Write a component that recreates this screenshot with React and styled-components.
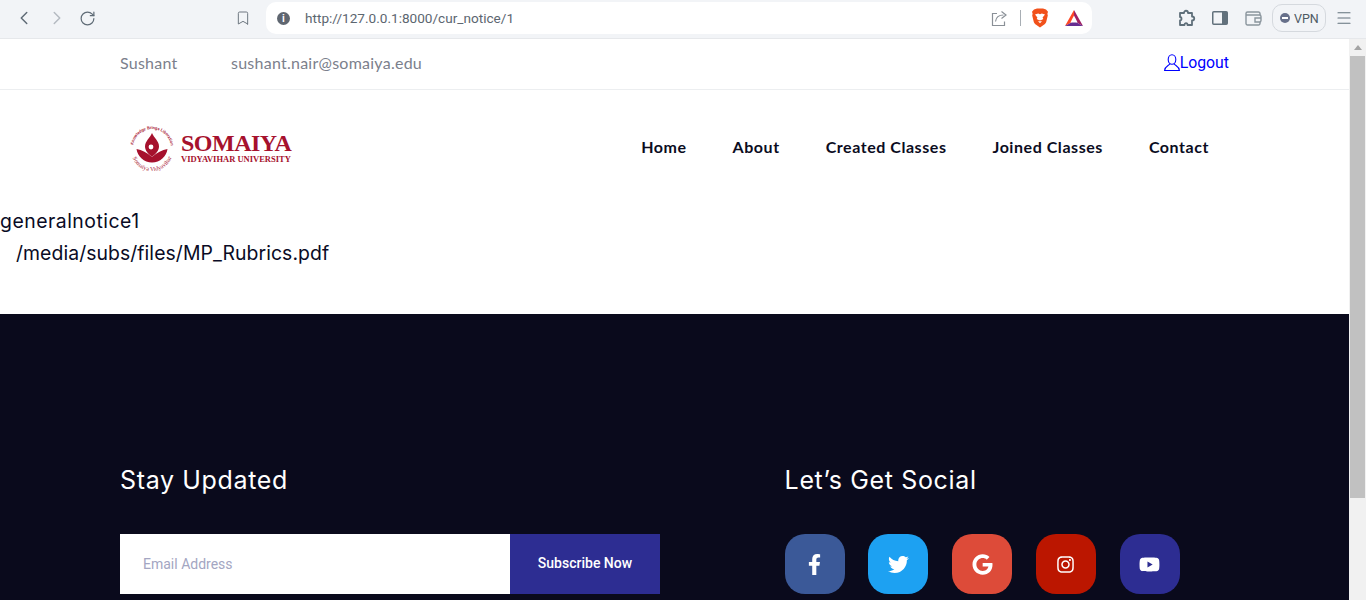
import React from "react";
import styled, { createGlobalStyle } from "styled-components";
import { FaFacebookF, FaTwitter, FaGoogle, FaInstagram, FaYoutube } from "react-icons/fa";
import { ChevronLeft, ChevronRight, RotateCw, Bookmark, Menu } from "lucide-react";

const Global = createGlobalStyle`
  html, body { margin: 0; padding: 0; height: 600px; overflow: hidden; background: #fff; }
  * { box-sizing: border-box; }
`;

const Shell = styled.div`
  width: 1366px;
  height: 600px;
  display: flex;
  flex-direction: column;
  overflow: hidden;
  font-family: "Lato", sans-serif;
`;

const BrowserBar = styled.header`
  flex: 0 0 39px;
  display: flex;
  align-items: center;
  background: #f2f4f7;
  border-bottom: 1px solid #e6e8eb;
  padding: 0 12px 2px 13px;
  color: #5f6b76;
`;

const NavIcons = styled.div`
  display: flex;
  align-items: center;
  gap: 11px;
  width: 222px;
`;

const NavIcon = styled.span`
  display: flex;
  color: ${(p) => (p.$dim ? "#b4bac1" : "#5f6b76")};
`;

const BookmarkSlot = styled.span`
  display: flex;
  width: 31px;
  color: #6e7780;
`;

const UrlBar = styled.div`
  width: 826px;
  height: 32px;
  background: #fff;
  border-radius: 10px;
  display: flex;
  align-items: center;
  padding: 0 9px 0 11px;
  font: 13.6px "Roboto", sans-serif;
  color: #5c6670;
`;

const InfoDot = styled.span`
  width: 13px;
  height: 13px;
  border-radius: 50%;
  background: #5f6670;
  color: #fff;
  font: bold 10px/13px "Liberation Sans", sans-serif;
  text-align: center;
  margin-right: 15px;
`;

const UrlText = styled.span`
  flex: 1;
`;

const UrlActions = styled.div`
  display: flex;
  align-items: center;
  gap: 16px;
`;

const ShareGroup = styled.div`
  display: flex;
  align-items: center;
  margin-right: -6px;
`;

const Divider = styled.span`
  width: 1px;
  height: 16px;
  background: #a8aeb4;
  margin-left: 12px;
`;

const ToolIcons = styled.div`
  display: flex;
  align-items: center;
  margin-left: 86px;
  gap: 16px;
  color: #62717c;
`;

const WalletSlot = styled.span`
  display: flex;
  margin-left: 1px;
`;

const VpnChip = styled.div`
  display: flex;
  align-items: center;
  gap: 4px;
  height: 28px;
  width: 54px;
  margin-left: 10px;
  padding-left: 7px;
  border: 1px solid #d5d9de;
  border-radius: 10px;
  font: 12.5px "Roboto", sans-serif;
  color: #4e5a64;
`;

const VpnDot = styled.span`
  width: 10px;
  height: 10px;
  border-radius: 50%;
  background: #67708a;
  display: flex;
  align-items: center;
  justify-content: center;
  &::after {
    content: "";
    width: 6px;
    height: 2px;
    background: #fff;
  }
`;

const MenuSlot = styled.span`
  display: flex;
  margin-left: 9px;
  color: #62717c;
`;

const Viewport = styled.div`
  flex: 1;
  min-height: 0;
  display: flex;
`;

const Page = styled.main`
  flex: 1;
  min-width: 0;
  display: flex;
  flex-direction: column;
`;

const Scrollbar = styled.div`
  flex: 0 0 17px;
  background: #f1f1f1;
  display: flex;
  flex-direction: column;
  align-items: center;
  padding-top: 6px;
`;

const ScrollArrow = styled.span`
  width: 0;
  height: 0;
  border-left: 4px solid transparent;
  border-right: 4px solid transparent;
  border-bottom: 5px solid #a3a3a3;
`;

const ScrollThumb = styled.span`
  width: 15px;
  height: 442px;
  margin-top: 6px;
  background: #c1c1c1;
`;

const TopBar = styled.div`
  flex: 0 0 51px;
  display: flex;
  align-items: center;
  padding: 0 120px 3px;
  border-bottom: 1px solid #eceef0;
  font-size: 16px;
  color: #7b808c;
  letter-spacing: 0.25px;
`;

const TopName = styled.span`
  width: 111px;
`;

const TopMail = styled.span`
  flex: 1;
`;

const LogoutLink = styled.a`
  display: flex;
  align-items: center;
  color: #0000ff;
  font: 15.8px "Roboto", sans-serif;
  letter-spacing: 0;
`;

const NavRow = styled.nav`
  flex: 0 0 114px;
  display: flex;
  align-items: center;
  justify-content: space-between;
  padding: 0 140px 0 128px;
`;

const Logo = styled.div`
  display: flex;
  align-items: center;
  gap: 5px;
  margin-top: 1px;
`;

const LogoWords = styled.div`
  display: flex;
  flex-direction: column;
  color: #a6112d;
  font-family: "Liberation Serif", serif;
  font-weight: 700;
  white-space: nowrap;
`;

const LogoName = styled.span`
  font-size: 24px;
  line-height: 23px;
  letter-spacing: -0.5px;
`;

const LogoSub = styled.span`
  font-size: 8.5px;
  line-height: 9px;
`;

const NavLinks = styled.div`
  display: flex;
  gap: 46px;
  margin-bottom: 2px;
`;

const NavLink = styled.a`
  font-size: 16px;
  font-weight: 700;
  color: #0b0c1e;
  letter-spacing: 0.55px;
`;

const Notice = styled.section`
  flex: 0 0 110px;
  font-size: 19.4px;
  color: #0a0b25;
  font-family: "Inter", sans-serif;
`;

const NoticeTitle = styled.div`
  line-height: 32px;
  margin-top: 1px;
  letter-spacing: 0.5px;
`;

const NoticeFile = styled.div`
  line-height: 32px;
  padding-left: 16px;
  letter-spacing: 0.07px;
`;

const Footer = styled.footer`
  flex: 1;
  min-height: 0;
  background: #0a0a1c;
  padding: 148px 120px 0;
  display: flex;
  gap: 124.6px;
  color: #fff;
  font-family: "Inter", sans-serif;
`;

const FooterCol = styled.div`
  width: ${(p) => p.$w}px;
  flex: none;
`;

const FooterTitle = styled.h3`
  margin: 0 0 36px;
  font-size: 25px;
  font-weight: 400;
  line-height: 36px;
  letter-spacing: 0.65px;
`;

const SubscribeForm = styled.div`
  display: flex;
  height: 60px;
`;

const EmailField = styled.div`
  width: 390px;
  background: #fff;
  color: #a3a6c2;
  font: 14px/60px "Roboto", sans-serif;
  padding-left: 23px;
`;

const SubscribeButton = styled.div`
  width: 150px;
  background: #2d2d92;
  color: #fff;
  font: 500 14px/58px "Roboto", sans-serif;
  text-align: center;
`;

const SocialRow = styled.div`
  display: flex;
  gap: 23.75px;
`;

const SocialButton = styled.a`
  width: 60px;
  height: 60px;
  border-radius: 20px;
  background: ${(p) => p.$bg};
  color: #fff;
  display: flex;
  align-items: center;
  justify-content: center;
  font-size: ${(p) => p.$size || 21}px;
`;

const Brave = () => (
  <svg width="18" height="20" viewBox="0 0 18 20">
    <path d="M3 1.5 6 .5h6l3 1 2 2.3-.6 2 .4 1.600-1.600 6.600c-.4 1.200-1.200 2-2.300 2.700L9 19.500l-3.900-2.800c-1.100-.7-1.900-1.500-2.300-2.700L1.200 7.400l.4-1.600-.6-2z" fill="#f1511b" />
    <path d="M4 6.500 7.200 5.600 9 6.300l1.800-.7 3.200.9-2.400 3 .7 1.400-2.300 1.300H8l-2.300-1.300.7-1.400z" fill="#fff" />
    <path d="M7 13.200h4L9 15.200z" fill="#fff" />
  </svg>
);

const Bat = () => (
  <svg width="18" height="16" viewBox="0 0 18 16">
    <path d="M9 0 L18 16 L9 11 Z" fill="#9e1f63" />
    <path d="M9 0 L0 16 L9 11 Z" fill="#ff4724" />
    <path d="M0 16 H18 L9 11 Z" fill="#662d91" />
    <path d="M9 5.500 L12.600 12.500 H5.400 Z" fill="#fff" />
  </svg>
);

const ShareIcon = () => (
  <svg width="17" height="17" viewBox="0 0 17 17" fill="none" stroke="#8a9097" strokeWidth="1.200">
    <path d="M6 3.500H1.500v12h12v-4" />
    <path d="M4.500 11.500c.5-4 3.500-6.500 8-6.500M10.500 1.500 15 5l-4.500 3.500" />
  </svg>
);

const PuzzleIcon = () => (
  <svg width="18" height="18" viewBox="0 0 18 18" fill="none" stroke="#5f6f7a" strokeWidth="1.800" strokeLinejoin="round">
    <path d="M2 4h4c0-3 4-3 4 0h4v3.500c3 0 3 4 0 4V16H9.500c0-2.500-3-2.500-3 0H2v-4.500c2 0 2-3.500 0-3.500z" />
  </svg>
);

const SidePanelIcon = () => (
  <svg width="16" height="14" viewBox="0 0 16 14">
    <rect x=".75" y=".75" width="14.500" height="12.500" rx="1" fill="none" stroke="#62717c" strokeWidth="1.500" />
    <rect x="10" y="1" width="5" height="12" fill="#62717c" />
  </svg>
);

const WalletIcon = () => (
  <svg width="17" height="15" viewBox="0 0 17 15" fill="none" stroke="#8a959d" strokeWidth="1.400">
    <path d="M15 4V2.500A1.500 1.500 0 0 0 13.500 1h-11A1.500 1.500 0 0 0 1 2.500v10A1.500 1.500 0 0 0 2.500 14h11a1.500 1.500 0 0 0 1.500-1.500V11" />
    <path d="M1 4h13.500a1.500 1.500 0 0 1 1.500 1.500v4a1.500 1.500 0 0 1-1.500 1.500H10V7h6" />
  </svg>
);

const PersonIcon = () => (
  <svg width="16" height="18" viewBox="0 0 16 18" fill="none" stroke="#0000ff" strokeWidth="1.100">
    <ellipse cx="8" cy="5.500" rx="3.800" ry="4.800" />
    <path d="M5.800 9.500C5.800 11.500 .8 12 .6 16.500h14.800C15.200 12 10.200 11.500 10.200 9.500" />
  </svg>
);

const Emblem = () => (
  <svg width="48" height="48" viewBox="0 0 48 48" overflow="visible">
    <defs>
      <path id="arcTop" d="M5 24a19 19 0 0 1 38 0" />
      <path id="arcBottom" d="M3 26a21 21 0 0 0 42 0" />
    </defs>
    <text fontSize="4.200" fill="#a6112d" fontFamily="Liberation Sans, sans-serif" fontWeight="700">
      <textPath href="#arcTop" startOffset="3" textLength="54" lengthAdjust="spacingAndGlyphs">Knowledge Brings Liberation</textPath>
    </text>
    <text fontSize="6" fill="#a6112d" fontFamily="Liberation Serif, serif">
      <textPath href="#arcBottom" startOffset="8" textLength="50" lengthAdjust="spacingAndGlyphs">Somaiya Vidyavihar</textPath>
    </text>
    <path d="M8.500 25C14 26 19 28.500 24 33c5-4.500 10-7 15.500-8C38.500 32.500 32 38.500 24 38.500S9.500 32.500 8.500 25z" fill="#a6112d" />
    <path d="M24 9c2 5 7 8 7 13.500 0 4.500-3.500 7.500-7 10.500-3.500-3-7-6-7-10.500C17 17 22 14 24 9z" fill="#a6112d" />
    <circle cx="23" cy="23" r="2.400" fill="#fff" />
  </svg>
);

export default function App() {
  return (
    <Shell>
      <Global />
      <BrowserBar>
        <NavIcons>
          <NavIcon><ChevronLeft size={22} strokeWidth={1.6} /></NavIcon>
          <NavIcon $dim><ChevronRight size={22} strokeWidth={1.6} /></NavIcon>
          <NavIcon><RotateCw size={17} strokeWidth={1.7} /></NavIcon>
        </NavIcons>
        <BookmarkSlot><Bookmark size={16} strokeWidth={1.5} /></BookmarkSlot>
        <UrlBar>
          <InfoDot>i</InfoDot>
          <UrlText>http://127.0.0.1:8000/cur_notice/1</UrlText>
          <UrlActions>
            <ShareGroup>
              <ShareIcon />
              <Divider />
            </ShareGroup>
            <Brave />
            <Bat />
          </UrlActions>
        </UrlBar>
        <ToolIcons>
          <PuzzleIcon />
          <SidePanelIcon />
          <WalletSlot><WalletIcon /></WalletSlot>
        </ToolIcons>
        <VpnChip><VpnDot />VPN</VpnChip>
        <MenuSlot><Menu size={18} strokeWidth={1.5} /></MenuSlot>
      </BrowserBar>
      <Viewport>
        <Page>
          <TopBar>
            <TopName>Sushant</TopName>
            <TopMail>sushant.nair@somaiya.edu</TopMail>
            <LogoutLink><PersonIcon />Logout</LogoutLink>
          </TopBar>
          <NavRow>
            <Logo>
              <Emblem />
              <LogoWords>
                <LogoName>SOMAIYA</LogoName>
                <LogoSub>VIDYAVIHAR UNIVERSITY</LogoSub>
              </LogoWords>
            </Logo>
            <NavLinks>
              <NavLink>Home</NavLink>
              <NavLink>About</NavLink>
              <NavLink>Created Classes</NavLink>
              <NavLink>Joined Classes</NavLink>
              <NavLink>Contact</NavLink>
            </NavLinks>
          </NavRow>
          <Notice>
            <NoticeTitle>generalnotice1</NoticeTitle>
            <NoticeFile>/media/subs/files/MP_Rubrics.pdf</NoticeFile>
          </Notice>
          <Footer>
            <FooterCol $w={540}>
              <FooterTitle>Stay Updated</FooterTitle>
              <SubscribeForm>
                <EmailField>Email Address</EmailField>
                <SubscribeButton>Subscribe Now</SubscribeButton>
              </SubscribeForm>
            </FooterCol>
            <FooterCol $w={400}>
              <FooterTitle>Let’s Get Social</FooterTitle>
              <SocialRow>
                <SocialButton $bg="#3b5998"><FaFacebookF /></SocialButton>
                <SocialButton $bg="#1da1f2"><FaTwitter /></SocialButton>
                <SocialButton $bg="#dd4b39"><FaGoogle /></SocialButton>
                <SocialButton $bg="#bb1600" $size={19}><FaInstagram /></SocialButton>
                <SocialButton $bg="#2d2d92"><FaYoutube /></SocialButton>
              </SocialRow>
            </FooterCol>
          </Footer>
        </Page>
        <Scrollbar>
          <ScrollArrow />
          <ScrollThumb />
        </Scrollbar>
      </Viewport>
    </Shell>
  );
}
